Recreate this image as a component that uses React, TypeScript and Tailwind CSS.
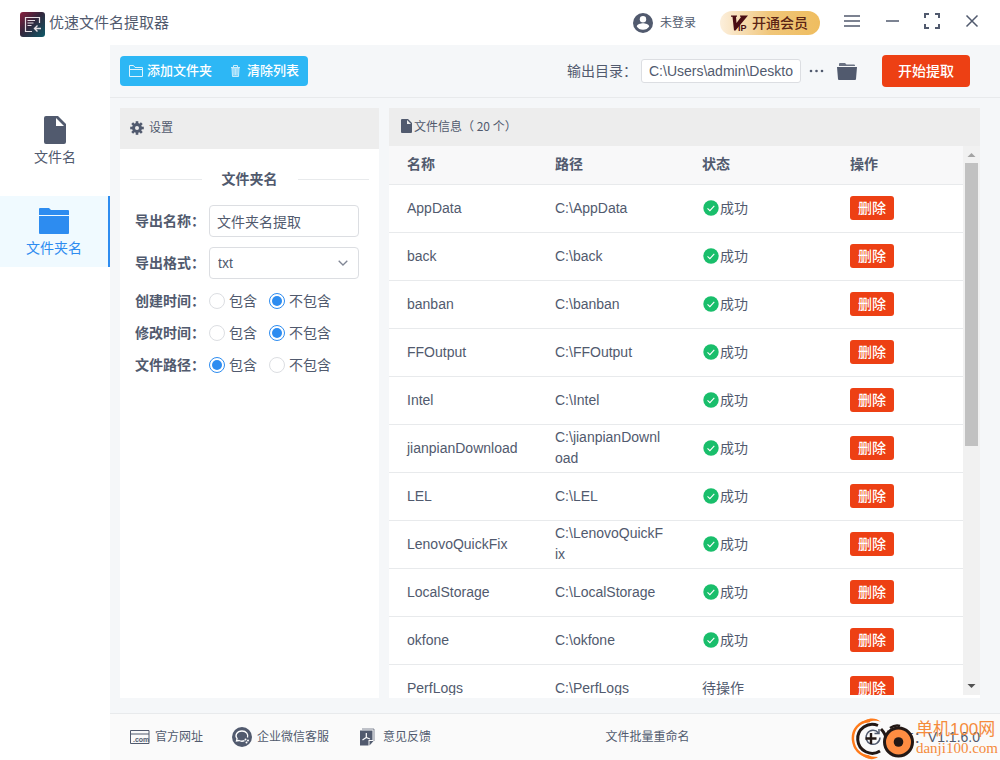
import type { ReactNode } from 'react'

type FileRow = {
  name: string
  path: string
  done: boolean
}

const files: FileRow[] = [
  { name: 'AppData',          path: 'C:\\AppData',          done: true },
  { name: 'back',             path: 'C:\\back',             done: true },
  { name: 'banban',           path: 'C:\\banban',           done: true },
  { name: 'FFOutput',         path: 'C:\\FFOutput',         done: true },
  { name: 'Intel',            path: 'C:\\Intel',            done: true },
  { name: 'jianpianDownload', path: 'C:\\jianpianDownload', done: true },
  { name: 'LEL',              path: 'C:\\LEL',              done: true },
  { name: 'LenovoQuickFix',   path: 'C:\\LenovoQuickFix',   done: true },
  { name: 'LocalStorage',     path: 'C:\\LocalStorage',     done: true },
  { name: 'okfone',           path: 'C:\\okfone',           done: true },
  { name: 'PerfLogs',         path: 'C:\\PerfLogs',         done: false },
]

const choices = [
  { id: 'created',  label: '创建时间：', include: false },
  { id: 'modified', label: '修改时间：', include: false },
  { id: 'filepath', label: '文件路径：', include: true },
]

function AppLogo() {
  return (
    <svg width="25" height="25" viewBox="0 0 25 25" aria-hidden="true">
      <defs>
        <linearGradient id="logo" x1="0" y1="0" x2="1" y2="1">
          <stop offset="0" stopColor="#8a1f3d" />
          <stop offset="0.45" stopColor="#33263c" />
          <stop offset="1" stopColor="#0d5a68" />
        </linearGradient>
      </defs>
      <rect width="25" height="25" rx="3" fill="url(#logo)" />
      <g fill="none" stroke="#e6dfe4" strokeWidth="1.2">
        <path d="M19.500 11V5.500h-14v14h6.500" />
        <path d="M7.500 8.500H15M7.500 11h6M7.500 13.500h4" />
        <path d="M21 16.500h-6.500M17.500 13.500l-3 3 3 3" strokeWidth="1.4" />
      </g>
    </svg>
  )
}

function FileIcon({ className }: { className: string }) {
  return (
    <svg viewBox="0 0 22 28" className={className} fill="currentColor" aria-hidden="true">
      <path fillRule="evenodd" d="M2 0h12l8 8v18a2 2 0 0 1-2 2H2a2 2 0 0 1-2-2V2a2 2 0 0 1 2-2zm10 2v8h8z" />
    </svg>
  )
}

function UserIcon() {
  return (
    <svg width="20" height="20" viewBox="0 0 20 20" aria-hidden="true">
      <circle cx="10" cy="10" r="10" fill="#515a6e" />
      <circle cx="10" cy="6.300" r="3.200" fill="#fff" />
      <path d="M3.800 13.500c0-2.200 4-3.200 6.200-3.200s6.200 1 6.200 3.200c-1.200 2-3.500 3.300-6.200 3.300s-5-1.300-6.200-3.300z" fill="#fff" />
    </svg>
  )
}

function SettingsIcon() {
  return (
    <svg width="14" height="14" viewBox="0 0 14 14" aria-hidden="true">
      <g fill="#515a6e">
        <circle cx="7" cy="7" r="4.900" />
        <rect x="5.700" y="0.200" width="2.600" height="13.600" />
        <rect x="5.700" y="0.200" width="2.600" height="13.600" transform="rotate(45 7 7)" />
        <rect x="5.700" y="0.200" width="2.600" height="13.600" transform="rotate(90 7 7)" />
        <rect x="5.700" y="0.200" width="2.600" height="13.600" transform="rotate(135 7 7)" />
      </g>
      <circle cx="7" cy="7" r="2" fill="#ededed" />
    </svg>
  )
}

function WindowButton({ label, children }: { label: string; children: ReactNode }) {
  return (
    <button type="button" aria-label={label} className="flex size-5 items-center justify-center">
      <svg width="16" height="16" viewBox="0 0 16 16" fill="none" stroke="#515a6e" strokeWidth="1.5" aria-hidden="true">
        {children}
      </svg>
    </button>
  )
}

function TitleBar() {
  return (
    <header className="flex h-[45px] shrink-0 items-center bg-white pr-[18px] pl-5">
      <div className="flex items-center gap-1 pt-1">
        <AppLogo />
        <h1 className="pb-1 text-[15px] leading-5">优速文件名提取器</h1>
      </div>
      <div className="ml-auto flex items-center">
        <button type="button" className="flex items-center gap-[7px] text-xs">
          <UserIcon />
          未登录
        </button>
        <button
          type="button"
          className="ml-6 flex h-6 w-[100px] items-center gap-1 rounded-full bg-linear-to-r from-[#fcefdc] via-[#f0c679] to-[#efbd5f] pl-[10px] text-sm font-medium text-[#5c2415]"
        >
          <svg width="18" height="18" viewBox="0 0 18 18" fill="#4a0d12" className="shrink-0" aria-label="VIP">
            <path d="M1 1.500h6v1.200H6l.5 6.300 4.700-6.300H10V1.500h8L5.500 16.500H4L2.500 2.700H1z" />
            <text x="8" y="17" fontSize="9" fontWeight="700" fontFamily="Liberation Sans, sans-serif">IP</text>
          </svg>
          开通会员
        </button>
        <div className="ml-[22px] flex gap-5 pb-1">
          <WindowButton label="菜单">
            <path d="M0 3h16M0 8h16M0 13h16" />
          </WindowButton>
          <WindowButton label="最小化">
            <path d="M2 8h13" />
          </WindowButton>
          <WindowButton label="最大化">
            <path d="M1 5V1h4M11 1h4v4M15 11v4h-4M5 15H1v-4" strokeWidth="2" />
          </WindowButton>
          <WindowButton label="关闭">
            <path d="M2.500 2.500l11 11M13.500 2.500l-11 11" />
          </WindowButton>
        </div>
      </div>
    </header>
  )
}

function SideNav() {
  return (
    <nav className="flex w-[110px] shrink-0 flex-col gap-5 bg-white pt-[60px] text-sm leading-5">
      <a href="#files" className="flex h-[71px] flex-col items-center pt-[11px]">
        <FileIcon className="h-7 w-[22px]" />
        <span className="mt-[3px]">文件名</span>
      </a>
      <a
        href="#folders"
        aria-current="page"
        className="flex h-[71px] flex-col items-center border-r-2 border-[#2d8cf0] bg-[#f0faff] pt-3 text-[#2d8cf0]"
      >
        <svg width="30" height="26" viewBox="0 0 30 26" fill="currentColor" aria-hidden="true">
          <path d="M0 1a1 1 0 0 1 1-1h9l2 2h17a1 1 0 0 1 1 1v4H0z" />
          <path d="M0 8h30v17a1 1 0 0 1-1 1H1a1 1 0 0 1-1-1z" />
        </svg>
        <span className="mt-1">文件夹名</span>
      </a>
    </nav>
  )
}

function Toolbar() {
  return (
    <div className="flex h-[53px] shrink-0 items-center border-b border-[#e8eaec] pr-[30px] pl-[10px]">
      <div className="flex h-[30px] items-center gap-[18px] rounded bg-[#2db7f5] px-[9px] text-[13px] font-medium text-white">
        <button type="button" className="flex items-center gap-1">
          <svg width="14" height="12" viewBox="0 0 14 12" fill="none" stroke="currentColor" opacity="0.85" aria-hidden="true">
            <path d="M.5.5h4l1.500 2h7.500v9H.5zM.5 4.500h13" />
          </svg>
          添加文件夹
        </button>
        <button type="button" className="flex items-center gap-[6px]">
          <svg width="11" height="12" viewBox="0 0 11 12" fill="none" stroke="currentColor" opacity="0.75" aria-hidden="true">
            <path d="M1 2.500h9M3.500 2.500v-2h4v2" />
            <path d="M2 3l.5 8.500h6L9 3z" fill="currentColor" fillOpacity="0.5" />
            <path d="M4 4v6M5.500 4v6M7 4v6" strokeWidth="0.800" />
          </svg>
          清除列表
        </button>
      </div>
      <div className="ml-auto flex items-center">
        <label htmlFor="output" className="text-sm">输出目录：</label>
        <input
          id="output"
          defaultValue="C:\Users\admin\Deskto"
          className="ml-1 h-6 w-[160px] rounded-[3px] border border-[#dcdee2] bg-white px-[7px] text-sm"
        />
        <button type="button" aria-label="更改目录" className="ml-2">
          <svg width="16" height="16" viewBox="0 0 16 16" fill="#515a6e" aria-hidden="true">
            <circle cx="2" cy="8" r="1.300" />
            <circle cx="7.500" cy="8" r="1.300" />
            <circle cx="13" cy="8" r="1.300" />
          </svg>
        </button>
        <button type="button" aria-label="打开目录" className="ml-3">
          <svg width="20" height="17" viewBox="0 0 20 17" fill="#515a6e" aria-hidden="true">
            <path d="M2 3V1a1 1 0 0 1 1-1h5l1.500 1.500H17a1 1 0 0 1 1 1V3z" opacity="0.850" />
            <path d="M0 4h20l-1 12a1 1 0 0 1-1 1H2a1 1 0 0 1-1-1z" />
          </svg>
        </button>
        <button type="button" className="ml-[25px] h-8 w-[88px] rounded bg-[#ed4014] text-sm font-medium text-white">
          开始提取
        </button>
      </div>
    </div>
  )
}

function Radio({ name, label, checked }: { name: string; label: string; checked: boolean }) {
  return (
    <label className="flex items-center gap-1">
      <input
        type="radio"
        name={name}
        defaultChecked={checked}
        className="size-4 appearance-none rounded-full border border-[#dcdee2] bg-white bg-clip-content p-[2px] checked:border-[#2d8cf0] checked:bg-[#2d8cf0]"
      />
      {label}
    </label>
  )
}

function SettingsPanel() {
  return (
    <section className="w-[259px] shrink-0 bg-white">
      <h2 className="flex h-[41px] items-center gap-[5px] bg-[#ededed] px-[10px] pb-[2px] text-xs">
        <SettingsIcon />
        设置
      </h2>
      <form className="text-sm leading-5">
        <div className="mx-[10px] mt-5 flex items-center gap-5 font-bold before:h-px before:flex-1 before:bg-[#e8eaec] after:h-px after:flex-1 after:bg-[#e8eaec]">
          文件夹名
        </div>
        <div className="mt-4 flex flex-col gap-[10px] pr-5 pl-[15px]">
          <div className="flex h-8 items-center">
            <label htmlFor="exportName" className="w-[74px] shrink-0 font-bold">导出名称：</label>
            <input
              id="exportName"
              defaultValue="文件夹名提取"
              className="h-8 w-full min-w-0 rounded border border-[#dcdee2] px-[7px]"
            />
          </div>
          <div className="flex h-8 items-center">
            <label htmlFor="exportFormat" className="w-[74px] shrink-0 font-bold">导出格式：</label>
            <div className="relative flex-1">
              <select id="exportFormat" className="h-8 w-full appearance-none rounded border border-[#dcdee2] px-2">
                <option>txt</option>
              </select>
              <svg
                width="10"
                height="6"
                viewBox="0 0 10 6"
                fill="none"
                stroke="#808695"
                strokeWidth="1.3"
                className="pointer-events-none absolute top-[13px] right-[11px]"
                aria-hidden="true"
              >
                <path d="M.7.700L5 5 9.300.700" />
              </svg>
            </div>
          </div>
        </div>
        <div className="mt-3 flex flex-col gap-3 pl-[15px]">
          {choices.map(choice => (
            <fieldset key={choice.id} aria-label={choice.label} className="flex items-center">
              <span className="w-[74px] font-bold">{choice.label}</span>
              <div className="flex gap-3">
                <Radio name={choice.id} label="包含" checked={choice.include} />
                <Radio name={choice.id} label="不包含" checked={!choice.include} />
              </div>
            </fieldset>
          ))}
        </div>
      </form>
    </section>
  )
}

function FileTable() {
  return (
    <table className="w-full table-fixed border-collapse text-left text-sm leading-[21px]">
      <thead>
        <tr className="h-[38px] border-b border-[#e8eaec] bg-[#f8f8f9]">
          <th className="w-[148px] px-[18px] font-bold">名称</th>
          <th className="w-[147px] px-[18px] font-bold">路径</th>
          <th className="w-[148px] px-[18px] font-bold">状态</th>
          <th className="px-[18px] font-bold">操作</th>
        </tr>
      </thead>
      <tbody>
        {files.map(file => (
          <tr key={file.name} className="h-12 border-b border-[#e8eaec]">
            <td className="px-[18px]">{file.name}</td>
            <td className="pr-5 pl-[18px] break-all">{file.path}</td>
            <td className="px-[18px]">
              {file.done ? (
                <span className="flex items-center gap-px">
                  <svg width="17" height="17" viewBox="0 0 17 17" aria-hidden="true">
                    <circle cx="9" cy="8" r="7.700" fill="#19be6b" />
                    <path d="M5.500 8.300l2.400 2.300 4.400-4.800" fill="none" stroke="#fff" strokeWidth="1.100" />
                  </svg>
                  成功
                </span>
              ) : '待操作'}
            </td>
            <td className="px-[18px]">
              <button type="button" className="block h-6 w-11 rounded-[3px] bg-[#ed4014] text-sm font-medium text-white">
                删除
              </button>
            </td>
          </tr>
        ))}
      </tbody>
    </table>
  )
}

function ScrollBar() {
  return (
    <div className="flex w-[17px] shrink-0 flex-col items-center bg-[#f1f1f1]" aria-hidden="true">
      <svg width="17" height="17" viewBox="0 0 17 17" fill="#a3a3a3" className="shrink-0">
        <path d="M4.500 11h8l-4-4z" />
      </svg>
      <div className="h-[283px] w-[13px] bg-[#c1c1c1]" />
      <svg width="17" height="17" viewBox="0 0 17 17" fill="#505050" className="mt-auto shrink-0">
        <path d="M4.500 6h8l-4 4z" />
      </svg>
    </div>
  )
}

function FilePanel() {
  return (
    <section className="flex min-w-0 flex-1 flex-col bg-white">
      <h2 className="flex h-[38px] shrink-0 items-center gap-[2px] bg-[#ededed] pb-[2px] pl-3 font-['Noto_Sans_CJK_SC',sans-serif] text-xs">
        <FileIcon className="h-[14px] w-[11px]" />
        文件信息（ 20 个）
      </h2>
      <div className="mb-[3px] flex min-h-0 flex-1 overflow-hidden">
        <div className="min-w-0 flex-1 overflow-hidden">
          <FileTable />
        </div>
        <ScrollBar />
      </div>
    </section>
  )
}

// Site mark in the lower right corner, lies over the version number
function SiteMark() {
  return (
    <div className="absolute right-[2px] bottom-0 flex h-[43px] items-center gap-px text-[#f58b3c]">
      <svg width="64" height="43" viewBox="0 0 64 43" fill="none" aria-hidden="true">
        <path d="M19 4C8 4 1 13 2 23c1 9 7 15 16 17" stroke="#ff7a1a" strokeWidth="2.500" />
        <path d="M10 7c4-6 14-8 20-2-5-2-9-1-12 0zM10 37c4 5 12 7 17 3-5 0-8-1-10-2z" fill="#ff7a1a" />
        <path d="M27 8.500A14.500 14.500 0 1 0 29 34" stroke="#231815" strokeWidth="3" />
        <path d="M14.500 21.500h11M20 16v11" stroke="#231815" strokeWidth="2.400" />
        <path d="M30 12c3 3 5 6 5 11" stroke="#231815" strokeWidth="3" />
        <circle cx="47.500" cy="25" r="14" fill="#ff8d42" stroke="#231815" strokeWidth="3" />
        <path d="M39 11c3-2 7-3 10-2" stroke="#231815" strokeWidth="2.500" />
        <circle cx="47.500" cy="25" r="4.800" fill="#231815" />
      </svg>
      <div className="flex flex-col pb-px">
        <span className="text-[17px] leading-5">单机100网</span>
        <span className="font-['Liberation_Serif',serif] text-[15px] leading-4">danji100.com</span>
      </div>
    </div>
  )
}

function Footer() {
  return (
    <footer className="relative flex h-[47px] shrink-0 items-center justify-between border-t border-[#e8eaec] bg-[#fafafa] pr-5 pl-5 text-xs">
      <div className="flex items-center">
        <a href="#site" className="flex items-center gap-[5px]">
          <svg width="20" height="16" viewBox="0 0 20 16" aria-hidden="true">
            <path d="M.5 1.500h18.500v13H.5zM.5 5h18.500" fill="none" stroke="#515a6e" />
            <text x="3" y="13" fontSize="7" fontWeight="700" fontFamily="Liberation Sans, sans-serif" fill="#515a6e">.com</text>
          </svg>
          官方网址
        </a>
        <a href="#support" className="ml-[29px] flex items-center gap-[5px]">
          <svg width="20" height="20" viewBox="0 0 20 20" aria-hidden="true">
            <circle cx="10" cy="10" r="10" fill="#515a6e" />
            <path d="M12.500 13.700c-2 .8-4 .6-5.500-.2L4.500 14l.6-2.300C2.500 8.500 4.800 4 10 4c4.500 0 6.500 3.500 5.500 6.500" fill="none" stroke="#fff" strokeWidth="1.300" />
            <circle cx="13.500" cy="12.500" r="1" fill="#fff" />
            <circle cx="16" cy="13.500" r="1" fill="#fff" />
            <circle cx="14.500" cy="15.500" r="1" fill="#fff" />
          </svg>
          企业微信客服
        </a>
        <a href="#feedback" className="ml-[30px] flex items-center gap-[7px]">
          <svg width="17" height="18" viewBox="0 0 17 18" aria-hidden="true">
            <path d="M3 1h12v12" fill="none" stroke="#515a6e" strokeOpacity="0.7" />
            <path d="M1 2.500h12.500V12H9.500v5.500H1z" fill="#515a6e" />
            <path d="M10.500 13h4l-4 4.500z" fill="#515a6e" />
            <path d="M7.300 5v4.500L3.500 12M7.300 9.500l3.700 1.500" fill="none" stroke="#fff" strokeWidth="1.200" />
          </svg>
          意见反馈
        </a>
      </div>
      <span>文件批量重命名</span>
      <div className="flex items-center gap-1 text-sm">
        <svg width="18" height="18" viewBox="0 0 18 18" fill="none" stroke="#515a6e" strokeWidth="1.500" aria-hidden="true">
          <path d="M14.500 5A7 7 0 1 0 16 9.500" />
          <path d="M15 1v4.500h-4.500" />
        </svg>
        <span>版本：V1.1.6.0</span>
      </div>
      <SiteMark />
    </footer>
  )
}

export default function App() {
  return (
    <div className="flex h-screen flex-col overflow-hidden bg-white font-['Liberation_Sans','Noto_Sans_CJK_SC',sans-serif] text-[#515a6e]">
      <TitleBar />
      <div className="flex min-h-0 flex-1">
        <SideNav />
        <main className="flex min-w-0 flex-1 flex-col bg-[#f5f7f9]">
          <Toolbar />
          <div className="flex min-h-0 flex-1 gap-[10px] pt-[10px] pr-5 pb-[15px] pl-[10px]">
            <SettingsPanel />
            <FilePanel />
          </div>
          <Footer />
        </main>
      </div>
    </div>
  )
}
